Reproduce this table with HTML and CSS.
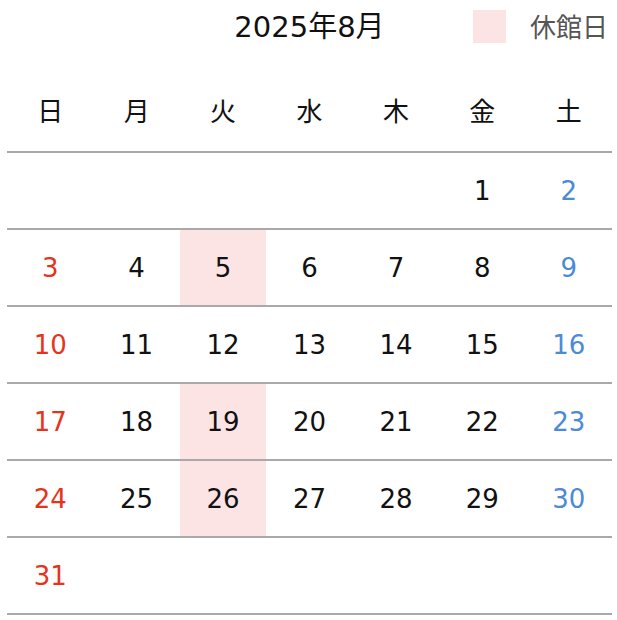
FILE: index.html
```html
<!DOCTYPE html>
<html lang="ja">
<head>
<meta charset="utf-8">
<link rel="stylesheet" href="styles.css">
</head>
<body>
<div class="cal">
  <div class="head">
    <div></div>
    <div class="title">2025年8月</div>
    <div class="legend"><span class="swatch"></span><span class="legend-text">休館日</span></div>
  </div>
  <div class="row week">
    <div class="cell">日</div><div class="cell">月</div><div class="cell">火</div><div class="cell">水</div><div class="cell">木</div><div class="cell">金</div><div class="cell">土</div>
  </div>
  <div class="row">
    <div class="cell"></div><div class="cell"></div><div class="cell"></div><div class="cell"></div><div class="cell"></div><div class="cell">1</div><div class="cell sat">2</div>
  </div>
  <div class="row">
    <div class="cell sun">3</div><div class="cell">4</div><div class="cell closed">5</div><div class="cell">6</div><div class="cell">7</div><div class="cell">8</div><div class="cell sat">9</div>
  </div>
  <div class="row">
    <div class="cell sun">10</div><div class="cell">11</div><div class="cell">12</div><div class="cell">13</div><div class="cell">14</div><div class="cell">15</div><div class="cell sat">16</div>
  </div>
  <div class="row">
    <div class="cell sun">17</div><div class="cell">18</div><div class="cell closed">19</div><div class="cell">20</div><div class="cell">21</div><div class="cell">22</div><div class="cell sat">23</div>
  </div>
  <div class="row">
    <div class="cell sun">24</div><div class="cell">25</div><div class="cell closed">26</div><div class="cell">27</div><div class="cell">28</div><div class="cell">29</div><div class="cell sat">30</div>
  </div>
  <div class="row">
    <div class="cell sun">31</div><div class="cell"></div><div class="cell"></div><div class="cell"></div><div class="cell"></div><div class="cell"></div><div class="cell"></div>
  </div>
</div>
</body>
</html>
```
FILE: styles.css
```css
html, body {
  margin: 0;
  padding: 0;
  background: #fff;
}
body {
  font-family: "DejaVu Sans", "Noto Sans CJK JP", sans-serif;
  color: #111;
}
.cal {
  margin: 0 5px 0 7px;
  width: 605px;
}
.head {
  display: grid;
  grid-template-columns: 1fr auto 1fr;
  align-items: center;
  height: 52px;
  margin-bottom: 16px;
}
.title {
  font-size: 29px;
  line-height: 1;
  padding-top: 3px;
}
.legend {
  justify-self: end;
  display: flex;
  align-items: center;
  gap: 24px;
  margin-right: 4px;
}
.swatch {
  width: 33px;
  height: 33px;
  background: #fde4e4;
}
.legend-text {
  font-family: "Noto Sans CJK JP", sans-serif;
  font-size: 26px;
  color: #555;
  line-height: 1;
}
.row {
  display: grid;
  grid-template-columns: repeat(7, 1fr);
  height: 77px;
  border-bottom: 2px solid #a9a9a9;
  box-sizing: border-box;
}
.row.week {
  height: 85px;
}
.week .cell {
  font-family: "Noto Sans CJK JP", sans-serif;
}
.cell {
  display: flex;
  align-items: center;
  justify-content: center;
  font-size: 26px;
}
.closed {
  background: #fde4e4;
}
.sun {
  color: #e6341c;
}
.sat {
  color: #4a8ad6;
}
```
